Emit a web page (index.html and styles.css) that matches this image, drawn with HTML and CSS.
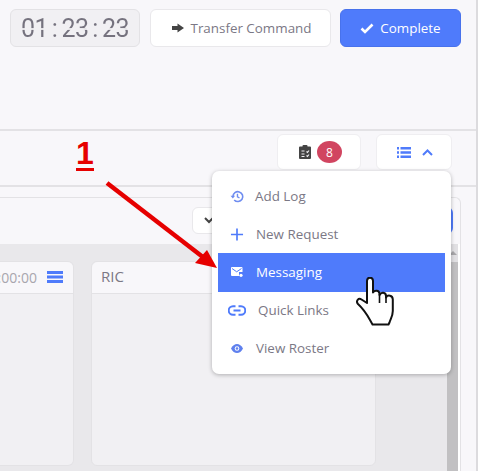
FILE: index.html
```html
<!DOCTYPE html>
<html lang="en">
<head>
    <meta charset="UTF-8">
    <meta name="viewport" content="width=device-width, initial-scale=1.0">
    <title>Incident Board</title>
    <link rel="stylesheet" href="styles.css">
</head>
<body>

<div class="page">
    <div class="main">
        <div class="top-bar">
            <div class="timer"><span>0</span><span class="digit-one">1</span><span>:</span><span>2</span><span>3</span><span>:</span><span>2</span><span>3</span></div>
            <button class="btn btn-transfer">
                <svg class="btn-icon" viewBox="0 0 12 10"><path d="M0 3h5.500V0.500L12 5 5.500 9.500V7H0z" fill="#444"/></svg>
                Transfer Command
            </button>
            <button class="btn btn-complete">
                <svg class="btn-icon btn-icon-check" viewBox="0 0 14 11"><path d="M1.500 5.500 5 9 12.500 1.500" fill="none" stroke="#fff" stroke-width="2.600"/></svg>
                Complete
            </button>
        </div>

        <div class="sub-bar">
            <div class="sub-btn sub-btn-tasks">
                <svg class="task-icon" viewBox="0 0 12 14">
                    <path d="M0 2.500A1 1 0 0 1 1 1.500H3.500V1A1 1 0 0 1 4.500 0H7.500A1 1 0 0 1 8.500 1V1.500H11A1 1 0 0 1 12 2.500V13A1 1 0 0 1 11 14H1A1 1 0 0 1 0 13z" fill="#444"/>
                    <path d="M2.500 6h3M2.500 9h3M2.500 11.500h3M7.500 6.500l1 1 1.500-2M7.500 10.500l1 1 1.500-2" fill="none" stroke="#f1f0f3" stroke-width="1.100"/>
                </svg>
                <span class="badge">8</span>
            </div>
            <div class="sub-btn sub-btn-menu">
                <svg class="list-icon" viewBox="0 0 14 11">
                    <path d="M0 0h2v2.400H0zM0 4.300h2v2.400H0zM0 8.600h2V11H0zM3.500 0H14v2.400H3.500zM3.500 4.300H14v2.400H3.500zM3.500 8.600H14V11H3.500z" fill="#4f7bfb"/>
                </svg>
                <svg class="chevron-icon" viewBox="0 0 11 7"><path d="M1 6 5.500 1.500 10 6" fill="none" stroke="#4f7bfb" stroke-width="2"/></svg>
            </div>
        </div>

        <div class="panel">
            <div class="panel-tools">
                <div class="tool-select">
                    <svg class="tool-chevron" viewBox="0 0 10 7"><path d="M1 1 5 5 9 1" fill="none" stroke="#444" stroke-width="2"/></svg>
                </div>
                <div class="tool-blue"></div>
            </div>
            <div class="board">
                <div class="lane lane-first">
                    <div class="lane-head lane-head-timer">
                        <span class="lane-time">00:00:00</span>
                        <svg class="lane-menu" viewBox="0 0 16 12"><path d="M0 0h16v3H0zM0 4.500h16v3H0zM0 9h16v3H0z" fill="#4f7bfb"/></svg>
                    </div>
                </div>
                <div class="lane lane-ric">
                    <div class="lane-head">RIC</div>
                </div>
                <div class="board-gap"></div>
                <div class="scrollbar">
                    <div class="scroll-arrow"></div>
                    <div class="scroll-thumb"></div>
                </div>
            </div>
        </div>
    </div>

    <!-- dropdown opened from the list button -->
    <div class="menu">
        <div class="menu-item">
            <svg class="menu-icon" viewBox="0 0 14 14">
                <path d="M2.600 7A5.300 5.300 0 1 1 4 10.700" fill="none" stroke="#6f8df0" stroke-width="1.700"/>
                <path d="M0 6.200h5L2.500 9.200z" fill="#6f8df0"/>
                <path d="M7.500 4v3.300l2.200 1.300" fill="none" stroke="#6f8df0" stroke-width="1.500"/>
            </svg>
            <span>Add Log</span>
        </div>
        <div class="menu-item menu-item-mid">
            <svg class="menu-icon" viewBox="0 0 14 14"><path d="M7 .5v13M.5 7h13" fill="none" stroke="#4f7bfb" stroke-width="1.800"/></svg>
            <span>New Request</span>
        </div>
        <div class="menu-item menu-item-mid menu-item-active">
            <svg class="menu-icon menu-icon-mail" viewBox="0 0 12 10">
                <path d="M1 0H10.500A1 1 0 0 1 11.500 1V5H8V9H1A1 1 0 0 1 0 8V1A1 1 0 0 1 1 0z" fill="#fff"/>
                <path d="M1 1.500 5.700 4.800 10.500 1.500" fill="none" stroke="#4f7bfb" stroke-width="1"/>
                <circle cx="10" cy="8.300" r="1.600" fill="#fff"/>
            </svg>
            <span>Messaging</span>
        </div>
        <div class="menu-item menu-item-wide">
            <svg class="menu-icon" viewBox="0 0 18 11">
                <path d="M7.500 1.200H5a4.300 4.300 0 0 0 0 8.600h2.500M10.500 1.200H13a4.300 4.300 0 0 1 0 8.600h-2.500M5.500 5.500h7" fill="none" stroke="#4f7bfb" stroke-width="2"/>
            </svg>
            <span>Quick Links</span>
        </div>
        <div class="menu-item menu-item-mid">
            <svg class="menu-icon menu-icon-eye" viewBox="0 0 12 9">
                <path d="M0 4.500C1.500 1.500 3.700 0 6 0s4.500 1.500 6 4.500C10.500 7.500 8.300 9 6 9S1.500 7.500 0 4.500z" fill="#5f80ee"/>
                <circle cx="6" cy="4.500" r="2.300" fill="#fff"/>
                <circle cx="6" cy="4.500" r="1.300" fill="#5f80ee"/>
            </svg>
            <span>View Roster</span>
        </div>
    </div>

    <!-- annotation drawn over the screen -->
    <div class="callout">1</div>
    <svg class="callout-arrow" viewBox="0 0 480 471">
        <path d="M107 183 208 261" fill="none" stroke="#e60000" stroke-width="4.500"/>
        <path d="M217 268 195 263 207 250z" fill="#e60000"/>
    </svg>

    <svg class="hand" viewBox="356 277 38 49">
        <path d="M367 303V281.500C367 276.500 373 276.500 373 281.500V292.500C374.500 290 379 290 379.500 293.500V295C381 291.500 386 292 386 296V297.500C387.500 294.500 392.800 295 392.800 299.500V311C392.800 316 390.500 319 389.500 322.500L388.500 324.500H372.500L370 320C367.500 315.500 364 309.500 358 304C355.500 301 358.500 297.500 361.500 299.500z" fill="#fff" stroke="#111" stroke-width="2" stroke-linejoin="round"/>
        <path d="M379.500 294V303M386 297V303" fill="none" stroke="#111" stroke-width="1.600"/>
    </svg>
</div>

</body>
</html>
```

FILE: styles.css
```css
* {
    box-sizing: border-box;
}

body {
    margin: 0;
    padding: 0;
    font-family: "Open Sans", Arial, sans-serif;
    font-size: 13.4px;
    color: #7b7885;
    background-color: #fff;
    overflow: hidden;
}

.page {
    position: relative;
    width: 480px;
    height: 471px;
    overflow: hidden;
}

.main {
    width: 478px;
    height: 471px;
    display: flex;
    flex-direction: column;
    background-color: #f8f7fa;
    border-right: 2px solid #dcdbde;
}

/* top bar */
.top-bar {
    height: 131px;
    flex: none;
    display: flex;
    align-items: flex-start;
    padding: 9px 0 0 10px;
    border-bottom: 2px solid #e3e2e5;
}

.timer {
    width: 130px;
    height: 38px;
    margin-right: 10px;
    display: flex;
    align-items: center;
    justify-content: center;
    background-color: #f1f0f3;
    border: 1px solid #e3e2e5;
    border-radius: 6px;
}

/* no lcd font here, so each char gets a cell and a gap through the middle */
.timer span {
    width: 13.5px;
    font-family: Roboto, Arial, sans-serif;
    font-size: 25px;
    font-weight: 400;
    line-height: 1;
    text-align: center;
    background: linear-gradient(#75727e 48%, #e3e2e5 48%, #e3e2e5 54%, #75727e 54%);
    -webkit-background-clip: text;
    background-clip: text;
    color: transparent;
}

.timer .digit-one {
    text-align: right;
}

.btn {
    height: 38px;
    display: flex;
    align-items: center;
    justify-content: center;
    font-family: inherit;
    font-size: 13.4px;
    border-radius: 6px;
    padding: 0;
}

.btn-transfer {
    width: 181px;
    margin-right: 9px;
    padding-left: 2px;
    color: #7b7885;
    background-color: #fff;
    border: 1px solid #e9e8eb;
}

.btn-complete {
    width: 121px;
    color: #fff;
    background-color: #4f7bfb;
    border: 1px solid #4872ec;
}

.btn-icon {
    width: 12px;
    height: 10px;
    margin-right: 7px;
}

.btn-icon-check {
    width: 14px;
    height: 11px;
    margin-right: 6px;
}

/* second bar */
.sub-bar {
    height: 56px;
    flex: none;
    display: flex;
    justify-content: flex-end;
    align-items: flex-start;
    gap: 15px;
    padding: 3px 24px 0 0;
    border-bottom: 2px solid #e3e2e5;
}

.sub-btn {
    height: 36px;
    display: flex;
    align-items: center;
    background-color: #fff;
    border: 1px solid #efeef1;
    border-radius: 6px;
}

.sub-btn-tasks {
    width: 84px;
    padding-left: 21px;
}

.sub-btn-menu {
    width: 76px;
    padding-left: 20px;
}

.task-icon {
    width: 12px;
    height: 14px;
    margin-right: 6px;
}

.badge {
    width: 25px;
    height: 22px;
    display: flex;
    align-items: center;
    justify-content: center;
    font-size: 12px;
    color: #fff;
    background-color: #d14560;
    border-radius: 50%;
}

.list-icon {
    width: 14px;
    height: 11px;
    margin-right: 11px;
}

.chevron-icon {
    width: 11px;
    height: 7px;
}

/* panel with the board */
.panel {
    flex: 1;
    margin: 10px 15px 0 -10px;
    display: flex;
    flex-direction: column;
    min-height: 0;
    border: 1px solid #e3e2e5;
    border-bottom: none;
    border-radius: 6px 6px 0 0;
}

.panel-tools {
    height: 46px;
    flex: none;
    display: flex;
    justify-content: flex-end;
    gap: 10px;
    padding: 9px 7px 0 0;
}

.tool-select {
    width: 48px;
    height: 27px;
    padding-left: 11px;
    display: flex;
    align-items: center;
    background-color: #fff;
    border: 1px solid #e9e8eb;
    border-radius: 6px;
}

.tool-chevron {
    width: 10px;
    height: 7px;
}

.tool-blue {
    width: 203px;
    height: 27px;
    background-color: #4f7bfb;
    border-radius: 6px;
}

.board {
    flex: 1;
    display: flex;
    min-height: 0;
    padding-left: 9px;
    background-color: #e9e8eb;
    border-right: 2px solid #fff;
}

.lane {
    height: 205px;
    margin-top: 17px;
    background-color: #f1f0f3;
    border: 1px solid #e3e2e5;
    border-radius: 6px;
}

.lane-first {
    width: 83px;
    margin-left: -9px;
    margin-right: 17px;
    border-left: none;
}

.lane-ric {
    width: 285px;
}

.lane-head {
    height: 32px;
    display: flex;
    align-items: center;
    padding: 0 0 3px 9px;
    font-size: 15px;
    background-color: #f8f7fa;
    border-bottom: 1px solid #e3e2e5;
    border-radius: 6px 6px 0 0;
}

.lane-head-timer {
    justify-content: flex-end;
    padding: 0 10px 1px 0;
    overflow: hidden;
    border-radius: 0 6px 0 0;
}

.lane-time {
    margin-right: 10px;
    font-size: 14px;
    color: #a8a6ae;
    white-space: nowrap;
}

.lane-menu {
    flex: none;
    width: 16px;
    height: 12px;
}

.board-gap {
    flex: 1;
}

.scrollbar {
    width: 11px;
    flex: none;
    display: flex;
    flex-direction: column;
    background-color: #e1e0e3;
}

.scroll-arrow {
    width: 0;
    height: 0;
    margin: 7px auto 7px;
    border-left: 4px solid transparent;
    border-right: 4px solid transparent;
    border-bottom: 4px solid #a8a7aa;
}

.scroll-thumb {
    flex: 1;
    background-color: #c1c0c2;
}

/* dropdown */
.menu {
    position: absolute;
    left: 212px;
    top: 171px;
    width: 239px;
    height: 203px;
    padding: 6px;
    background-color: #fff;
    border-radius: 7px;
    box-shadow: 0 1px 4px rgba(0, 0, 0, 0.28);
}

.menu-item {
    height: 38px;
    display: flex;
    align-items: center;
    gap: 9px;
    padding-left: 10px;
}

.menu-item-mid {
    gap: 10px;
}

.menu-item-wide {
    gap: 12px;
}

.menu-item-active {
    height: 39px;
    margin-bottom: -1px;
    padding-bottom: 1px;
    color: #fff;
    background-color: #4f7bfb;
}

.menu-icon {
    width: 18px;
    height: 13px;
}

.menu-icon-mail {
    height: 10px;
}

.menu-icon-eye {
    height: 9px;
}

/* annotation */
.callout {
    position: absolute;
    left: 76px;
    top: 135px;
    width: 18px;
    height: 36px;
    font-family: "Liberation Sans", Arial, sans-serif;
    font-size: 32px;
    font-weight: bold;
    line-height: 37px;
    text-align: center;
    color: #e60000;
    border-bottom: 3px solid #e60000;
}

.callout-arrow {
    position: absolute;
    left: 0;
    top: 0;
    width: 480px;
    height: 471px;
}

.hand {
    position: absolute;
    left: 356px;
    top: 277px;
    width: 38px;
    height: 49px;
}
```
